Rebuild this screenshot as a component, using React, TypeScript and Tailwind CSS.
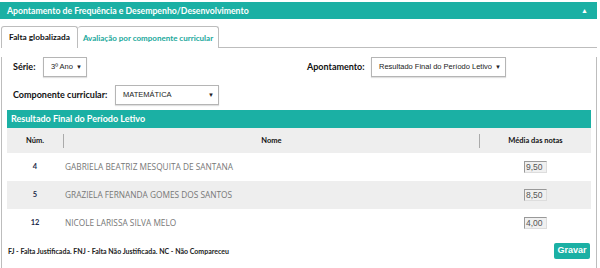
import React from "react";

const teal = "bg-[#1bb0a4]";

function Select({ label, w, className = "" }: { label: string; w: string; className?: string }) {
  return (
    <div
      className={`flex h-[20px] shrink-0 items-center justify-between whitespace-nowrap border border-[#b5b5b5] bg-white pl-[7px] pr-[4px] shadow-[0_1px_1px_rgba(0,0,0,0.12)] ${w} ${className}`}
      style={{ fontFamily: "'Liberation Sans', Arial, sans-serif" }}
    >
      <span className="text-[7.5px] text-[#222]">{label}</span>
      <span className="text-[6px] text-[#222]">▼</span>
    </div>
  );
}

const rows = [
  { n: "4", name: "GABRIELA BEATRIZ MESQUITA DE SANTANA", v: "9,50" },
  { n: "5", name: "GRAZIELA FERNANDA GOMES DOS SANTOS", v: "8,50" },
  { n: "12", name: "NICOLE LARISSA SILVA MELO", v: "4,00" },
];

export default function App() {
  const head = { fontFamily: "Lato, 'Noto Sans', sans-serif" };
  const body = { fontFamily: "'Open Sans', 'Noto Sans', sans-serif" };
  return (
    <div className="h-[268px] w-[600px] overflow-hidden whitespace-nowrap bg-white" style={head}>
      <div className={`mt-[2px] flex h-[17px] w-[597px] items-center justify-between ${teal} pl-[7px] pr-[9px]`}>
        <span className="text-[8.7px] font-bold text-white">
          Apontamento de Frequência e Desempenho/Desenvolvimento
        </span>
        <span className="text-[7px] leading-none text-white">▲</span>
      </div>

      <div className="ml-[1px] mt-[7px] flex h-[22px] w-[596px]">
        <div className="relative z-10 flex h-[22px] w-[77px] shrink-0 items-center justify-center rounded-t-[3px] border border-b-0 border-[#bdbdbd] bg-white">
          <span className="text-[8.3px] font-bold text-[#111]">Falta globalizada</span>
        </div>
        <div className="flex h-[22px] w-[141px] shrink-0 items-center justify-center rounded-t-[3px] border border-b-0 border-l-0 border-[#bdbdbd] bg-white">
          <span className="text-[8px] font-bold text-[#1aa89c]">Avaliação por componente curricular</span>
        </div>
        <div className="flex-1 self-end border-b border-[#bdbdbd]" />
      </div>

      <div className="ml-[1px] h-[218px] w-[596px] border border-t-0 border-[#bdbdbd] px-[5px]">
        <div className="mt-[9px] flex h-[20px] items-center">
          <span className="ml-[6px] w-[30px] shrink-0 text-[9px] font-bold text-[#111]">Série:</span>
          <Select label="3º Ano" w="w-[44px]" />
          <span className="ml-[220px] w-[64px] shrink-0 text-[9px] font-bold text-[#111]">Apontamento:</span>
          <Select label="Resultado Final do Período Letivo" w="w-[135px]" />
        </div>
        <div className="mt-[8px] flex h-[20px] items-center">
          <span className="ml-[6px] w-[102px] shrink-0 text-[9px] font-bold text-[#111]">Componente curricular:</span>
          <Select label="MATEMÁTICA" w="w-[104px]" />
        </div>

        <div className={`mt-[5px] flex h-[18px] items-center ${teal} pl-[4px]`}>
          <span className="text-[9px] font-bold text-white">Resultado Final do Período Letivo</span>
        </div>
        <div className="flex h-[25px] items-center bg-[#eeeeee]">
          <div className="w-[56px] shrink-0 text-center text-[7.5px] font-bold text-[#111]">Núm.</div>
          <div className="h-[14px] w-px bg-[#aaa]" />
          <div className="flex-1 text-center text-[7.5px] font-bold text-[#111]">Nome</div>
          <div className="h-[14px] w-px bg-[#aaa]" />
          <div className="w-[111px] shrink-0 text-center text-[7.5px] font-bold text-[#111]">Média das notas</div>
        </div>
        {rows.map((r, i) => (
          <div key={r.n} className={`flex h-[28px] items-center ${i === 1 ? "bg-[#eeeeee]" : "bg-white"}`}>
            <div className="w-[56px] shrink-0 text-center text-[7.5px] font-bold text-[#1d2a4a]">{r.n}</div>
            <div className="flex-1 pl-[2px] text-[8.3px] text-[#777]" style={body}>{r.name}</div>
            <div className="flex w-[111px] shrink-0 justify-center">
              <div
                className="flex h-[12px] w-[23px] items-center border border-[#999] border-r-[#ddd] border-b-[#ddd] bg-[#f0f0f0] pl-px text-[8.5px] leading-none text-[#555]"
                style={{ fontFamily: "'Liberation Sans', Arial, sans-serif" }}
              >
                {r.v}
              </div>
            </div>
          </div>
        ))}
        <div className="mt-[6px] flex items-center justify-between">
          <span className="ml-px text-[7px] font-bold text-[#222]">
            FJ - Falta Justificada. FNJ - Falta Não Justificada. NC - Não Compareceu
          </span>
          <div
            className={`mr-[1px] flex h-[16px] w-[36px] items-center justify-center rounded-[2px] ${teal} text-[9px] font-bold text-white`}
            style={{ fontFamily: "'Liberation Sans', Arial, sans-serif" }}
          >
            Gravar
          </div>
        </div>
      </div>
    </div>
  );
}
